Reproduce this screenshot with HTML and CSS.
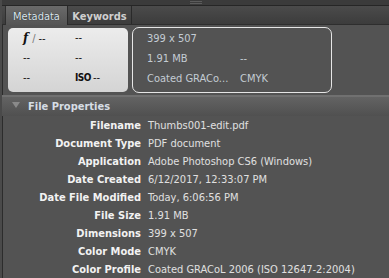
FILE: index.html
```html
<!DOCTYPE html>
<html lang="en">
<head>
  <meta charset="UTF-8" />
  <meta name="viewport" content="width=device-width, initial-scale=1.0" />
  <link rel="stylesheet" href="styles.css">
</head>
<body>
  <div class="panel">
    <div class="grip"><span></span></div>
    <div class="tabbar">
      <div class="tab active">Metadata</div>
      <div class="tab">Keywords</div>
    </div>

    <div class="summary">
      <div class="camera">
        <div class="cam-cell"><i class="fstop">f</i><span class="slash">/</span>--</div>
        <div class="cam-cell">--</div>
        <div class="cam-cell">--</div>
        <div class="cam-cell">--</div>
        <div class="cam-cell">--</div>
        <div class="cam-cell"><b class="iso">ISO</b>--</div>
      </div>
      <div class="fileinfo">
        <div>399 x 507</div>
        <div></div>
        <div>1.91 MB</div>
        <div>--</div>
        <div>Coated GRACo...</div>
        <div>CMYK</div>
      </div>
    </div>

    <div class="section-head">
      <span class="twisty"></span>
      File Properties
    </div>

    <div class="props">
      <div class="label">Filename</div><div class="value">Thumbs001-edit.pdf</div>
      <div class="label">Document Type</div><div class="value">PDF document</div>
      <div class="label">Application</div><div class="value">Adobe Photoshop CS6 (Windows)</div>
      <div class="label">Date Created</div><div class="value">6/12/2017, 12:33:07 PM</div>
      <div class="label">Date File Modified</div><div class="value">Today, 6:06:56 PM</div>
      <div class="label">File Size</div><div class="value">1.91 MB</div>
      <div class="label">Dimensions</div><div class="value">399 x 507</div>
      <div class="label">Color Mode</div><div class="value">CMYK</div>
      <div class="label">Color Profile</div><div class="value">Coated GRACoL 2006 (ISO 12647-2:2004)</div>
    </div>
  </div>
</body>
</html>
```

FILE: styles.css
```css
html, body {
  margin: 0;
  height: 100%;
  overflow: hidden;
}
body {
  background: #535353;
  font-family: "DejaVu Sans Condensed", "DejaVu Sans", sans-serif;
  font-size: 11px;
  color: #e2e2e2;
}
.panel {
  height: 100%;
  border-left: 2px solid #4a4a4a;
  box-shadow: inset 1px 0 0 #2c2c2c;
}

/* top grip strip */
.grip {
  height: 5px;
  background: #3b3b3b;
  border-bottom: 1px solid #262626;
  display: flex;
  justify-content: center;
  align-items: center;
}
.grip span {
  width: 12px;
  height: 1px;
  border-top: 1px solid #5c5c5c;
  border-bottom: 1px solid #5c5c5c;
}

/* tabs */
.tabbar {
  height: 18px;
  display: flex;
  padding-left: 3px;
  background: linear-gradient(#4b4b4b, #3c3c3c);
  border-bottom: 1px solid #2e2e2e;
}
.tab {
  width: 64px;
  padding-top: 4px;
  text-align: center;
  font-weight: bold;
  color: #cfcfcf;
  border-right: 1px solid #2a2a2a;
  box-sizing: border-box;
}
.tab.active {
  width: 63px;
  background: linear-gradient(#6a6a6a, #555555);
  border-left: 1px solid #2f2f2f;
  border-right: 1px solid #2a2a2a;
  margin-bottom: -1px;
  color: #dce6ee;
  font-weight: normal;
  text-shadow: 0 0 1px #1a1a1a;
}

/* summary cards */
.summary {
  display: flex;
  gap: 4px;
  padding: 2px 0 2px 6px;
  height: 66px;
  border-bottom: 2px solid #707070;
}
.camera {
  width: 120px;
  height: 64px;
  margin-top: 1px;
  border-radius: 5px;
  background: linear-gradient(#ececec, #d4d4d4);
  display: grid;
  grid-template-columns: 52px 1fr;
  grid-auto-rows: 20px;
  padding: 2px 0 0 15px;
  box-sizing: border-box;
  color: #111;
  line-height: 16px;
}
.fstop {
  font-family: "DejaVu Serif", serif;
  font-weight: bold;
  font-size: 12px;
}
.slash {
  color: #777;
  margin: 0 3px 0 4px;
}
.iso {
  font-size: 10px;
  letter-spacing: -0.5px;
  margin-right: 2px;
}
.fileinfo {
  width: 200px;
  height: 66px;
  border: 1px solid #e6e6e6;
  border-radius: 7px;
  box-sizing: border-box;
  display: grid;
  grid-template-columns: 93px 1fr;
  grid-auto-rows: 20px;
  padding: 3px 0 0 14px;
  color: #c4ccd4;
  line-height: 16px;
}

/* section header */
.section-head {
  height: 19px;
  box-sizing: border-box;
  padding: 3px 0 0 26px;
  position: relative;
  background: linear-gradient(#636363, #505050);
  font-weight: bold;
  color: #d6dde4;
}
.twisty {
  position: absolute;
  left: 10px;
  top: 5px;
  border-left: 4px solid transparent;
  border-right: 4px solid transparent;
  border-top: 6px solid #8a8a8a;
}

/* property rows */
.props {
  display: grid;
  grid-template-columns: 139px 1fr;
  column-gap: 7px;
  grid-auto-rows: 18px;
  padding-top: 1px;
  line-height: 18px;
}
.label {
  text-align: right;
  font-weight: bold;
  color: #f2f2f2;
}
.value {
  color: #e0e0e0;
  white-space: nowrap;
}
```
